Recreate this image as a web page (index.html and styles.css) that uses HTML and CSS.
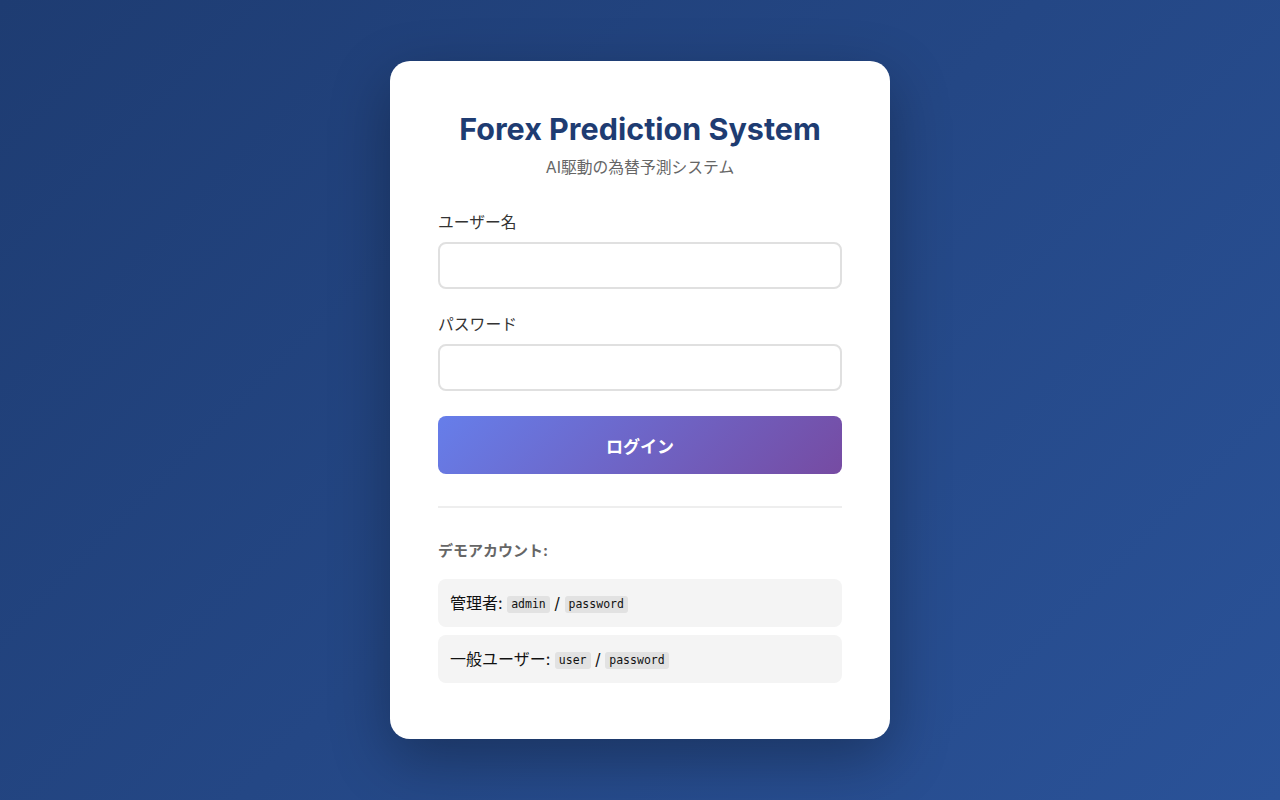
FILE: index.html
```html
<!DOCTYPE html>
<html lang="ja">
<head>
<meta charset="utf-8">
<title>Forex Prediction System</title>
<link rel="stylesheet" href="styles.css">
</head>
<body>
<div class="page">
  <div class="card">
    <div class="header">
      <h1 class="title">Forex Prediction System</h1>
      <p class="subtitle">AI駆動の為替予測システム</p>
    </div>
    <form class="form">
      <div class="field">
        <label class="label">ユーザー名</label>
        <input class="input" type="text">
      </div>
      <div class="field">
        <label class="label">パスワード</label>
        <input class="input" type="password">
      </div>
      <button class="btn" type="button">ログイン</button>
    </form>
    <div class="demo">
      <h3 class="demo-title">デモアカウント:</h3>
      <div class="demo-item">管理者: <code>admin</code> / <code>password</code></div>
      <div class="demo-item">一般ユーザー: <code>user</code> / <code>password</code></div>
    </div>
  </div>
</div>
</body>
</html>
```
FILE: styles.css
```css
* { box-sizing: border-box; }
html, body { margin: 0; padding: 0; }
body {
  font-family: Inter, "Noto Sans CJK JP", sans-serif;
  background: linear-gradient(135deg, #1e3c72 0%, #2a5298 100%);
  min-height: 100vh;
}
.page {
  min-height: 100vh;
  display: flex;
  align-items: center;
  justify-content: center;
}
.card {
  width: 500px;
  background: #fff;
  border-radius: 20px;
  padding: 48px;
  box-shadow: 0 20px 60px rgba(0,0,0,0.3);
}
.header { text-align: center; margin-bottom: 33px; }
.title {
  margin: 0 0 8px;
  font-size: 30.5px;
  font-weight: 700;
  color: #1e3c72;
  line-height: 40px;
}
.subtitle { margin: 0; color: #666; font-size: 15.8px; line-height: 22px; }
.field { margin-bottom: 25px; }
.label { display: block; font-size: 15.8px; color: #333; margin-bottom: 8px; line-height: 22px; }
.input {
  display: block;
  width: 100%;
  height: 47px;
  border: 2px solid #e0e0e0;
  border-radius: 8px;
  padding: 10px 14px;
  font-size: 15px;
  font-family: inherit;
}
.btn {
  display: block;
  width: 100%;
  height: 58px;
  border: none;
  border-radius: 8px;
  background: linear-gradient(135deg, #667eea 0%, #764ba2 100%);
  color: #fff;
  font-size: 17px;
  font-weight: 700;
  font-family: inherit;
}
.demo {
  margin-top: 32px;
  padding-top: 32px;
  border-top: 2px solid #eee;
}
.demo-title { margin: 0 0 17px; font-size: 15px; font-weight: 700; color: #666; line-height: 22px; }
.demo-item {
  background: #f4f4f4;
  border-radius: 8px;
  padding: 12px;
  height: 48px;
  font-size: 16px;
  line-height: 24px;
  color: #111;
  margin-bottom: 8px;
}
code {
  font-family: "DejaVu Sans Mono", monospace;
  font-size: 11.5px;
  line-height: 13px;
  background: #e2e2e2;
  padding: 2px 4px;
  border-radius: 3px;
  display: inline-block;
  vertical-align: 1px;
}
```
